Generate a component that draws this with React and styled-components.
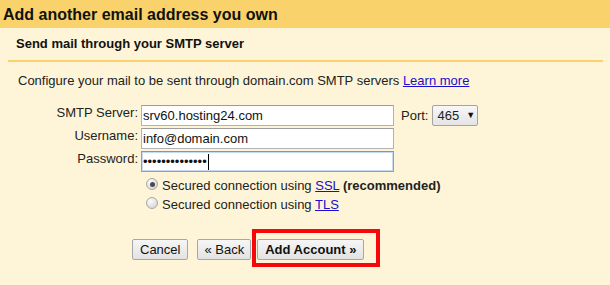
import React from "react";
import styled, { createGlobalStyle } from "styled-components";

const Global = createGlobalStyle`
  html, body { margin: 0; padding: 0; }
  body {
    background: #fef5d8;
    font-family: "Liberation Sans", Arial, sans-serif;
    font-size: 13px;
    color: #222;
  }
`;

const Page = styled.div`
  width: 610px;
  height: 285px;
  background: #fef5d8;
  overflow: hidden;
`;

const Header = styled.div`
  height: 28px;
  box-sizing: border-box;
  padding: 6px 0 0 3px;
  background: #f9d26b;
  font-size: 16px;
  line-height: 18px;
  font-weight: bold;
  color: #111;
`;

const Panel = styled.div`
  margin: 0 7px 0 8px;
`;

const SubTitle = styled.div`
  padding: 8px 0 9px 8px;
  font-weight: bold;
  line-height: 15px;
  color: #111;
`;

const Divider = styled.div`
  height: 2px;
  background: #f9d26b;
`;

const Description = styled.div`
  margin-top: 11px;
  padding-left: 10px;
  line-height: 15px;
`;

const Link = styled.a`
  color: #1a0dcc;
  text-decoration: underline;
  cursor: pointer;
`;

const Form = styled.div`
  margin-top: 17px;
  display: flex;
  flex-direction: column;
  gap: 2px;
`;

const Row = styled.div`
  display: flex;
  align-items: flex-start;
`;

const Label = styled.div`
  width: 130px;
  padding-right: 3px;
  text-align: right;
  line-height: 15px;
`;

const Field = styled.div`
  box-sizing: border-box;
  width: 253px;
  height: 21px;
  padding: 2px 1px;
  background: #fff;
  border: 1px solid ${(p) => (p.$focused ? "#7ba2dd" : "#b3b3b3")};
  border-top-color: ${(p) => (p.$focused ? "#6f97d6" : "#9c9c9c")};
  box-shadow: ${(p) => (p.$focused ? "inset 0 0 0 1px #c9daf3" : "none")};
  line-height: 15px;
  color: #111;
  white-space: nowrap;
  display: flex;
  align-items: center;
`;

const Dots = styled.span`
  font-size: 13px;
`;

const Caret = styled.span`
  display: inline-block;
  width: 1px;
  height: 16px;
  margin-left: 1px;
  background: #000;
`;

const PortLabel = styled.div`
  margin-left: 7px;
  line-height: 21px;
`;

const Select = styled.div`
  box-sizing: border-box;
  margin-left: 4px;
  width: 46px;
  height: 21px;
  padding-left: 4px;
  display: flex;
  align-items: center;
  gap: 7px;
  border: 1px solid #a3a3a3;
  border-radius: 2px;
  background: linear-gradient(#f8f8f8, #e4e4e4);
  line-height: 15px;
`;

const Arrow = styled.span`
  font-size: 9px;
  color: #111;
`;

const Radios = styled.div`
  margin-top: 4px;
  padding-left: 138px;
`;

const RadioRow = styled.div`
  display: flex;
  align-items: flex-start;
  gap: 4px;
  line-height: 19px;
`;

const RadioDot = styled.span`
  box-sizing: border-box;
  margin-top: 2px;
  width: 12px;
  height: 12px;
  border-radius: 50%;
  border: 1px solid #a8a8a8;
  background: radial-gradient(circle at 35% 30%, #fbfbfb 0%, #dcdcdc 70%, #c9c9c9 100%);
  display: flex;
  align-items: center;
  justify-content: center;
  &::after {
    content: "";
    width: 5px;
    height: 5px;
    border-radius: 50%;
    background: ${(p) => (p.$checked ? "#4a4a4a" : "transparent")};
  }
`;

const Bold = styled.b`
  font-weight: bold;
`;

const Buttons = styled.div`
  margin-top: 25px;
  padding-left: 124px;
  display: flex;
  align-items: center;
`;

const Button = styled.button`
  position: relative;
  box-sizing: border-box;
  height: 21px;
  margin: 0 ${(p) => p.$gap || 0}px 0 0;
  padding: 0 ${(p) => p.$pad || 7}px;
  border: 1px solid #a7a7a7;
  border-radius: 2px;
  background: linear-gradient(#f6f6f6, #e2e2e2);
  font-family: "Liberation Sans", Arial, sans-serif;
  font-size: 13px;
  font-weight: ${(p) => (p.$primary ? "bold" : "normal")};
  color: #111;
  line-height: 15px;
`;

const Highlight = styled.span`
  position: absolute;
  left: -6px;
  top: -11px;
  right: -17px;
  bottom: -8px;
  border: 4px solid #f5080c;
  pointer-events: none;
`;

export default function App() {
  return (
    <Page>
      <Global />
      <Header>Add another email address you own</Header>
      <Panel>
        <SubTitle>Send mail through your SMTP server</SubTitle>
        <Divider />
        <Description>
          Configure your mail to be sent through domain.com SMTP servers <Link>Learn more</Link>
        </Description>
        <Form>
          <Row>
            <Label>SMTP Server:</Label>
            <Field>srv60.hosting24.com</Field>
            <PortLabel>Port:</PortLabel>
            <Select>
              465 <Arrow>▼</Arrow>
            </Select>
          </Row>
          <Row>
            <Label>Username:</Label>
            <Field>info@domain.com</Field>
          </Row>
          <Row>
            <Label>Password:</Label>
            <Field $focused>
              <Dots>••••••••••••••</Dots>
              <Caret />
            </Field>
          </Row>
        </Form>
        <Radios>
          <RadioRow>
            <RadioDot $checked />
            <span>
              Secured connection using <Link>SSL</Link> <Bold>(recommended)</Bold>
            </span>
          </RadioRow>
          <RadioRow>
            <RadioDot />
            <span>
              Secured connection using <Link>TLS</Link>
            </span>
          </RadioRow>
        </Radios>
        <Buttons>
          <Button $gap={9}>Cancel</Button>
          <Button $gap={6} $pad={6}>« Back</Button>
          <Button $primary>
            Add Account »
            <Highlight />
          </Button>
        </Buttons>
      </Panel>
    </Page>
  );
}
